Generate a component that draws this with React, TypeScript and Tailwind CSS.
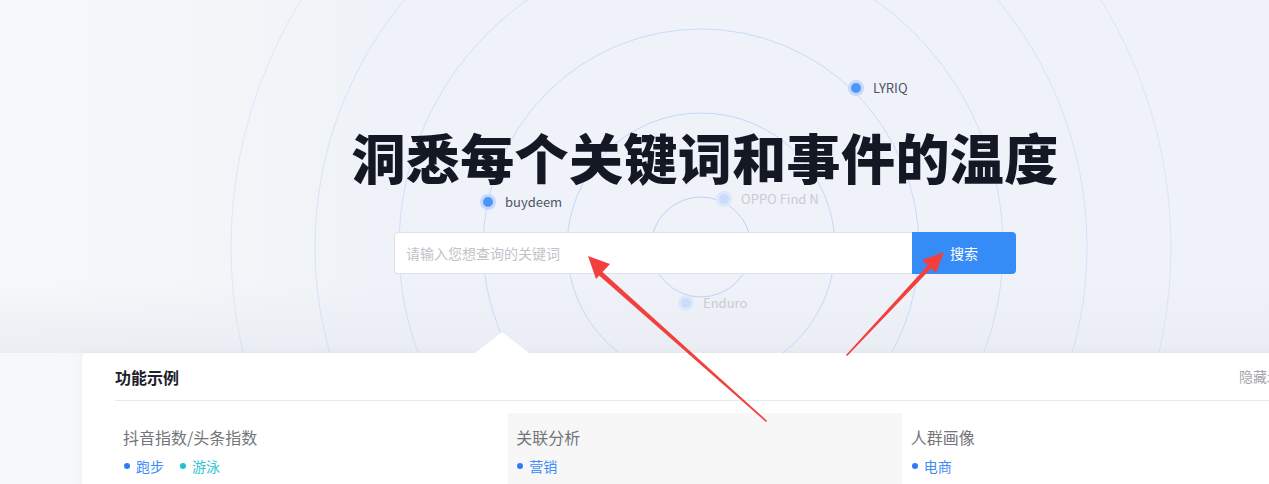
import React from "react";

const FONT = '"Noto Sans CJK SC", "Noto Sans", sans-serif';

function Pin({ x, y, label, faded }: { x: number; y: number; label: string; faded?: boolean }) {
  return (
    <div className="absolute flex items-center" style={{ left: x - 8, top: y - 8 }}>
      <span
        className={
          faded
            ? "flex h-4 w-4 items-center justify-center rounded-full bg-[#dde8fb]"
            : "flex h-4 w-4 items-center justify-center rounded-full bg-[#c4dafc]"
        }
      >
        <span className={faded ? "h-[10px] w-[10px] rounded-full bg-[#c9dcfa]" : "h-[10px] w-[10px] rounded-full bg-[#4f95f7]"} />
      </span>
      <span className={faded ? "ml-[9px] text-[13px] leading-4 text-[#c8ccd3]" : "ml-[9px] text-[13px] leading-4 text-[#4d5566]"}>
        {label}
      </span>
    </div>
  );
}

function Rings() {
  const rings = [
    { r: 50, o: 1 },
    { r: 134, o: 0.85 },
    { r: 218, o: 0.75 },
    { r: 302, o: 0.6 },
    { r: 386, o: 0.5 },
    { r: 470, o: 0.4 },
  ];
  return (
    <svg className="pointer-events-none absolute left-0 top-0" width="1269" height="353" viewBox="0 0 1269 353">
      {rings.map((c) => (
        <circle key={c.r} cx="701" cy="247" r={c.r} fill="none" stroke="#bcd3f8" strokeWidth="1" opacity={c.o} />
      ))}
    </svg>
  );
}

function Arrows() {
  return (
    <svg className="pointer-events-none absolute left-0 top-0" width="1269" height="484" viewBox="0 0 1269 484">
      <polygon points="766,422 767.2,421 602,271.5 598.5,275" fill="#f2403e" />
      <polygon points="588,256 610,264 596,279" fill="#f2403e" />
      <polygon points="846,355 847.2,356 932.5,267 929,264" fill="#f2403e" />
      <polygon points="944,252 936,273 922,260" fill="#f2403e" />
    </svg>
  );
}

function Item({ label, dot, text }: { label: string; dot: string; text: string }) {
  return (
    <div className="flex items-center gap-[6px]">
      <span className={dot} />
      <span className={text}>{label}</span>
    </div>
  );
}

export default function App() {
  return (
    <div className="relative h-[484px] w-[1269px] overflow-hidden bg-[#eff2f8]" style={{ fontFamily: FONT }}>
      <div className="absolute inset-0 bg-[linear-gradient(90deg,#f7f8fa_0%,#f4f6f9_14%,rgba(239,242,248,0)_30%)]" />
      <div className="absolute left-0 top-0 h-[353px] w-full bg-[linear-gradient(180deg,rgba(235,238,244,0)_80%,#eaedf3_100%)]" />

      {/* hero */}
      <div className="relative h-[353px]">
        <Rings />
        <Pin x={856} y={88} label="LYRIQ" />
        <Pin x={488} y={202} label="buydeem" />
        <Pin x={724} y={199} label="OPPO Find N" faded />
        <Pin x={686} y={303} label="Enduro" faded />

        <div className="relative ml-[141px] flex flex-col items-center pt-[130px]">
          <h1 className="text-[54px] font-black leading-[54px] tracking-[0.4px] text-[#141824]">洞悉每个关键词和事件的温度</h1>
          <div className="mt-[48px] flex h-[42px] w-[622px]">
            <div className="flex flex-1 items-center rounded-l-[4px] border border-r-0 border-[#dde1e8] bg-white pl-[11px] text-[14px] text-[#bfc3c9]">
              请输入您想查询的关键词
            </div>
            <button className="flex w-[104px] items-center justify-center rounded-r-[4px] bg-[#368cf6] text-[14px] text-white">
              搜索
            </button>
          </div>
        </div>
      </div>

      {/* panel */}
      <div className="relative ml-[82px] w-[1246px] rounded-tl-[4px] bg-white px-[33px] shadow-[0_-1px_6px_rgba(200,208,220,0.2)]">
        <div className="absolute left-[393px] top-[-21px] h-0 w-0 border-x-[27px] border-b-[21px] border-x-transparent border-b-white" />
        <div className="flex h-[48px] items-center justify-between border-b border-[#e8eaee]">
          <span className="text-[16px] font-bold text-[#1d2129]">功能示例</span>
          <span className="text-[14px] text-[#a3a6ab]">隐藏示例</span>
        </div>
        <div className="grid grid-cols-3 pt-[12px]">
          <div className="px-[8px] pt-[12px] pb-4">
            <div className="text-[16px] leading-6 text-[#737578]">抖音指数/头条指数</div>
            <div className="mt-[7px] flex h-5 items-center gap-[16px] pl-[1px] text-[14px]">
              <Item label="跑步" dot="h-[6px] w-[6px] rounded-full bg-[#2f7bf5]" text="text-[#3e8cf6]" />
              <Item label="游泳" dot="h-[6px] w-[6px] rounded-full bg-[#1ec3cc]" text="text-[#2fc4cf]" />
            </div>
          </div>
          <div className="bg-[#f7f7f8] px-[8px] pt-[12px] pb-4">
            <div className="text-[16px] leading-6 text-[#737578]">关联分析</div>
            <div className="mt-[7px] flex h-5 items-center gap-[16px] pl-[1px] text-[14px]">
              <Item label="营销" dot="h-[6px] w-[6px] rounded-full bg-[#2f7bf5]" text="text-[#3e8cf6]" />
            </div>
          </div>
          <div className="px-[9px] pt-[12px] pb-4">
            <div className="text-[16px] leading-6 text-[#737578]">人群画像</div>
            <div className="mt-[7px] flex h-5 items-center gap-[16px] pl-[1px] text-[14px]">
              <Item label="电商" dot="h-[6px] w-[6px] rounded-full bg-[#2f7bf5]" text="text-[#3e8cf6]" />
            </div>
          </div>
        </div>
      </div>

      <Arrows />
    </div>
  );
}
